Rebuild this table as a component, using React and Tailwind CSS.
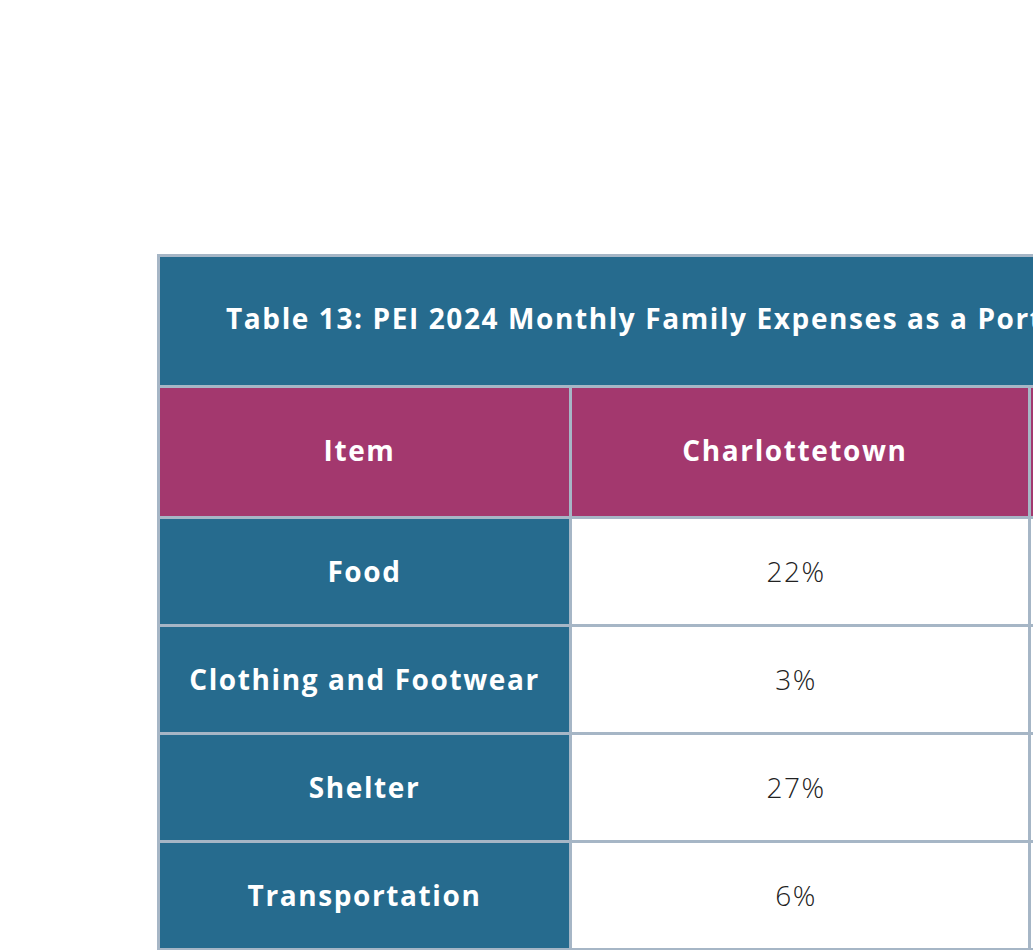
import React from "react";

const rows = [
  ["Food", "22%", "21%"],
  ["Clothing and Footwear", "3%", "3%"],
  ["Shelter", "27%", "25%"],
  ["Transportation", "6%", "10%"],
];

export default function App() {
  return (
    <div className="w-[1033px] h-[950px] overflow-hidden bg-white" style={{ fontFamily: '"Open Sans", "Noto Sans", sans-serif' }}>
      <div className="pl-[157px] pt-[254px]">
        <div className="w-[1340px] bg-[#a6b6c6] p-[3px] flex flex-col gap-[3px]">
          <div className="h-[128px] bg-[#266b8e] flex items-center pl-[66px] pb-[6px]">
            <span className="text-white font-bold text-[28px] whitespace-nowrap tracking-[1.6px]">
              Table 13: PEI 2024 Monthly Family Expenses as a Portion of Income
            </span>
          </div>
          <div className="grid grid-cols-[409px_456px_1fr] gap-[3px]">
            <div className="h-[128px] bg-[#a3386e] flex items-center justify-center pr-[10px] pb-[4px]">
              <span className="text-white font-bold text-[28px] tracking-[1.6px]">Item</span>
            </div>
            <div className="h-[128px] bg-[#a3386e] flex items-center justify-center pr-[10px] pb-[4px]">
              <span className="text-white font-bold text-[28px] tracking-[1.6px]">Charlottetown</span>
            </div>
            <div className="h-[128px] bg-[#a3386e] flex items-center justify-center pb-[4px]">
              <span className="text-white font-bold text-[28px] tracking-[1.6px]">Rural PEI</span>
            </div>
            {rows.map(([item, a, b]) => (
              <React.Fragment key={item}>
                <div className="h-[105px] bg-[#266b8e] flex items-center justify-center pb-[2px]">
                  <span className="text-white font-bold text-[28px] tracking-[1.6px] whitespace-nowrap">{item}</span>
                </div>
                <div className="h-[105px] bg-white flex items-center justify-center pr-[8px] pb-[2px]">
                  <span className="text-[#222222] font-light text-[28px] tracking-[1.5px]">{a}</span>
                </div>
                <div className="h-[105px] bg-white flex items-center justify-center">
                  <span className="text-[#222222] font-light text-[28px] tracking-[1.5px]">{b}</span>
                </div>
              </React.Fragment>
            ))}
          </div>
        </div>
      </div>
    </div>
  );
}
